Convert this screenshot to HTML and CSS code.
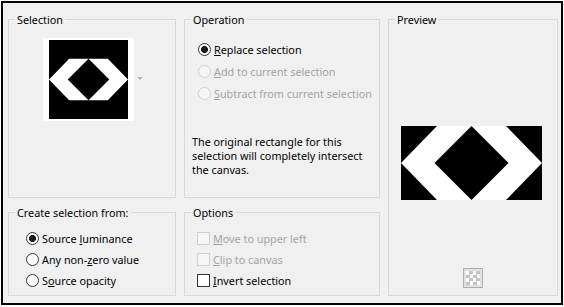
FILE: index.html
```html
<!DOCTYPE html>
<html lang="en">
<head>
    <meta charset="UTF-8">
    <meta name="viewport" content="width=device-width, initial-scale=1.0">
    <title>Selection From Mask</title>
    <link rel="stylesheet" href="styles.css">
</head>
<body>
    <div class="frame">
        <div class="dialog">
            <fieldset class="group group-selection">
                <legend>Selection</legend>
                <div class="thumb-row">
                    <div class="thumb">
                        <svg xmlns="http://www.w3.org/2000/svg" viewBox="0 -33.5 141 141" width="79" height="79"><rect x="0" y="-33.5" width="141" height="141" fill="#000"></rect><polygon points="36 0 105 0 141 37 105 74 36 74 0 37" fill="#fff"></polygon><polygon points="70.5 0 107.5 37 70.5 74 33.5 37" fill="#000"></polygon></svg>
                    </div>
                    <span class="drop-arrow"></span>
                </div>
            </fieldset>

            <fieldset class="group group-operation">
                <legend>Operation</legend>
                <div class="choices">
                    <label class="choice"><input type="radio" name="op" checked><span><u>R</u>eplace selection</span></label>
                    <label class="choice disabled"><input type="radio" name="op" disabled><span><u>A</u>dd to current selection</span></label>
                    <label class="choice disabled"><input type="radio" name="op" disabled><span><u>S</u>ubtract from current selection</span></label>
                </div>
                <p class="note">The original rectangle for this selection will completely intersect the canvas.</p>
            </fieldset>

            <fieldset class="group group-preview">
                <legend>Preview</legend>
                <div class="preview-image">
                    <svg xmlns="http://www.w3.org/2000/svg" viewBox="0 0 141 74" width="141" height="74"><rect width="141" height="74" fill="#000"></rect><polygon points="36 0 105 0 141 37 105 74 36 74 0 37" fill="#fff"></polygon><polygon points="70.5 0 107.5 37 70.5 74 33.5 37" fill="#000"></polygon></svg>
                </div>
                <button class="bg-button" type="button"><span class="checker"></span></button>
            </fieldset>

            <fieldset class="group group-source">
                <legend>Create selection from:</legend>
                <div class="choices">
                    <label class="choice"><input type="radio" name="src" checked><span>Source <u>l</u>uminance</span></label>
                    <label class="choice"><input type="radio" name="src"><span>Any non-<u>z</u>ero value</span></label>
                    <label class="choice"><input type="radio" name="src"><span>S<u>o</u>urce opacity</span></label>
                </div>
            </fieldset>

            <fieldset class="group group-options">
                <legend>Options</legend>
                <div class="choices">
                    <label class="choice disabled"><input type="checkbox" disabled><span><u>M</u>ove to upper left</span></label>
                    <label class="choice disabled"><input type="checkbox" disabled><span><u>C</u>lip to canvas</span></label>
                    <label class="choice"><input type="checkbox"><span><u>I</u>nvert selection</span></label>
                </div>
            </fieldset>
        </div>
    </div>
</body>
</html>
```

FILE: styles.css
```css
body {
    margin: 0;
    background-color: #fff;
    font-family: "Noto Sans", "Open Sans", sans-serif;
    font-size: 10.8px;
    color: #000;
}
.frame {
    margin: 1px 1px 0 1px;
    border: 2px solid #000;
    height: 300px;
    background-color: #f0f0f0;
}
.dialog {
    display: grid;
    grid-template-columns: 168px 196px 170px;
    grid-template-rows: 186px 91px;
    column-gap: 8px;
    row-gap: 7px;
    padding: 9px 3px 7px 5px;
}
.group {
    margin: 0;
    padding: 0;
    min-width: 0;
    border: 1px solid #d9d9d9;
    display: flex;
    flex-direction: column;
}
.group legend {
    margin-left: 6px;
    padding: 0 2px;
    line-height: 15px;
}
.group-preview {
    grid-column: 3;
    grid-row: 1 / 3;
    align-items: center;
}
.group-source {
    grid-column: 1;
    grid-row: 2;
}
.group-options {
    grid-column: 2;
    grid-row: 2;
}

/* selection thumbnail */
.thumb-row {
    display: flex;
    align-items: center;
    margin: 11px 0 0 34px;
    gap: 3px;
}
.thumb {
    background-color: #fff;
    padding: 2px 6px;
    display: flex;
}
.drop-arrow {
    width: 0;
    height: 0;
    border-left: 3px solid transparent;
    border-right: 3px solid transparent;
    border-top: 3px solid #b4b4b4;
    margin-bottom: 2px;
}

/* radios and checkboxes */
.choices {
    display: flex;
    flex-direction: column;
}
.choice {
    display: flex;
    align-items: center;
    height: 22px;
}
.choice span {
    margin-left: 3px;
}
.choice.disabled {
    color: #a3a3a3;
}
.choice input {
    appearance: none;
    -webkit-appearance: none;
    margin: 0;
    width: 13px;
    height: 13px;
    border: 1px solid #333;
    background-color: #fff;
    flex-shrink: 0;
}
.choice input[type="radio"] {
    border-radius: 50%;
}
.choice input[type="radio"]:checked {
    background: radial-gradient(circle, #1a1a1a 0 3.2px, #fff 3.8px);
}
.choice input:disabled {
    border-color: #cfcfcf;
    background-color: #f6f6f6;
}

.group-operation .choices {
    margin: 11px 0 0 13px;
}
.group-source .choices {
    margin: 8px 0 0 17px;
}
.group-source .choice,
.group-options .choice {
    height: 21px;
}
.group-options .choices {
    margin: 8px 0 0 12px;
}
.note {
    margin: 31px 0 0 7px;
    width: 182px;
    line-height: 14px;
}

/* preview */
.preview-image {
    display: flex;
    margin-top: 99px;
    margin-right: 3px;
}
.bg-button {
    margin-top: 68px;
    width: 20px;
    height: 20px;
    padding: 2px;
    border: 1px solid #adadad;
    background-color: #e1e1e1;
    display: flex;
}
.checker {
    width: 14px;
    height: 14px;
    background-color: #fff;
    background-image: conic-gradient(#c4c4c4 25%, #fff 0 50%, #c4c4c4 0 75%, #fff 0);
    background-size: 7px 7px;
}
```
